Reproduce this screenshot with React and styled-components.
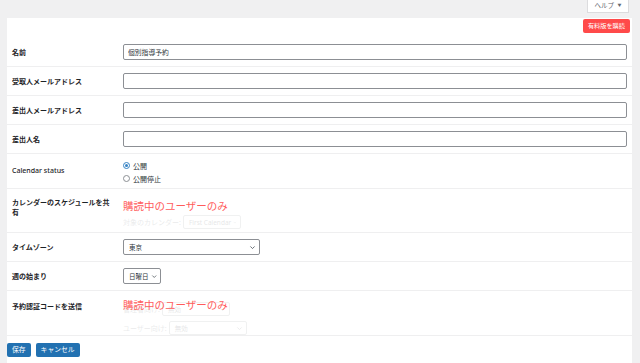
import styled, { createGlobalStyle } from "styled-components";

const GlobalStyle = createGlobalStyle`
  html, body {
    margin: 0;
    padding: 0;
    background: #f0f0f1;
  }
  body {
    font-family: "Noto Sans", "Noto Sans CJK JP", sans-serif;
    color: #1d2327;
  }
`;

const Chevron = ({ size = 7 }) => (
  <svg width={size} height={size} viewBox="0 0 10 10" fill="none">
    <path d="M2 3.5 L5 6.5 L8 3.5" stroke="#50575e" strokeWidth="1.2" />
  </svg>
);

export default function App() {
  return (
    <Page>
      <GlobalStyle />
      <TopBar>
        <HelpTab>
          ヘルプ <Caret>▼</Caret>
        </HelpTab>
      </TopBar>
      <Panel>
        <PanelHead>
          <PaidButton>有料版を購読</PaidButton>
        </PanelHead>

        <Row>
          <Label>名前</Label>
          <Field>
            <TextInput defaultValue="個別指導予約" />
          </Field>
        </Row>
        <Row>
          <Label>受取人メールアドレス</Label>
          <Field>
            <TextInput />
          </Field>
        </Row>
        <Row>
          <Label>差出人メールアドレス</Label>
          <Field>
            <TextInput />
          </Field>
        </Row>
        <Row>
          <Label>差出人名</Label>
          <Field>
            <TextInput />
          </Field>
        </Row>

        <Row>
          <Label $top={12} $weight={500}>
            Calendar status
          </Label>
          <Field $pad="5px 0 3px">
            <RadioLine>
              <Radio $checked />
              公開
            </RadioLine>
            <RadioLine>
              <Radio />
              公開停止
            </RadioLine>
          </Field>
        </Row>

        <Row>
          <Label $top={9}>カレンダーのスケジュールを共有</Label>
          <Field $pad="26px 0 3px">
            <Locked $top={10}>購読中のユーザーのみ</Locked>
            <Faded>
              <FadedLine>
                対象のカレンダー:
                <Select $width={58}>
                  First Calendar <Chevron />
                </Select>
              </FadedLine>
            </Faded>
          </Field>
        </Row>

        <Row>
          <Label>タイムゾーン</Label>
          <Field>
            <Select $width={137} $solid>
              東京 <Chevron />
            </Select>
          </Field>
        </Row>
        <Row>
          <Label>週の始まり</Label>
          <Field>
            <Select $width={38} $solid>
              日曜日 <Chevron />
            </Select>
          </Field>
        </Row>

        <Row>
          <Label $top={11}>予約認証コードを送信</Label>
          <Field $pad="11px 0 0">
            <Locked $top={7}>購読中のユーザーのみ</Locked>
            <Faded>
              <FadedLine>
                管理者向け:
                <Select $width={68}>
                  無効 <Chevron />
                </Select>
              </FadedLine>
              <FadedLine>
                ユーザー向け:
                <Select $width={78}>
                  無効 <Chevron />
                </Select>
              </FadedLine>
            </Faded>
          </Field>
        </Row>

        <Footer>
          <PrimaryButton>保存</PrimaryButton>
          <PrimaryButton>キャンセル</PrimaryButton>
        </Footer>
      </Panel>
    </Page>
  );
}

const Page = styled.div`
  height: 363px;
  overflow: hidden;
  padding: 0 8px 0 7px;
`;

const TopBar = styled.div`
  height: 18px;
  display: flex;
  justify-content: flex-end;
  align-items: flex-start;
`;

const HelpTab = styled.div`
  height: 13px;
  width: 42px;
  margin-right: 3px;
  box-sizing: border-box;
  background: #fff;
  border: 1px solid #dcdcde;
  border-top: none;
  font-size: 6.5px;
  line-height: 12px;
  color: #646970;
  text-align: center;
  white-space: nowrap;
`;

const Caret = styled.span`
  font-size: 4px;
  vertical-align: 1px;
  margin-left: 2px;
`;

const Panel = styled.div`
  background: #fff;
  min-height: 345px;
`;

const PanelHead = styled.div`
  height: 20px;
  display: flex;
  justify-content: flex-end;
  align-items: flex-start;
  padding-right: 2px;
`;

const PaidButton = styled.div`
  margin-top: 1px;
  height: 14px;
  padding: 0 5px;
  background: #ff4a4a;
  border-radius: 2px;
  color: #fff;
  font-size: 6.2px;
  line-height: 14px;
  white-space: nowrap;
`;

const Row = styled.div`
  display: grid;
  grid-template-columns: 111px 1fr;
  padding: 0 5px;
  border-bottom: 1px solid #efeff0;
`;

const Label = styled.div`
  padding-top: ${(p) => p.$top ?? 10}px;
  font-size: 7px;
  line-height: 10px;
  font-weight: ${(p) => p.$weight ?? 700};
  padding-right: 8px;
`;

const Field = styled.div`
  position: relative;
  padding: ${(p) => p.$pad || "6px 0"};
`;

const TextInput = styled.input`
  display: block;
  width: 100%;
  height: 16px;
  box-sizing: border-box;
  border: 1px solid #8c8f94;
  border-radius: 2px;
  padding: 0 4px;
  font-family: inherit;
  font-size: 6.8px;
  color: #2c3338;
  background: #fff;
  outline: none;
`;

const RadioLine = styled.div`
  display: flex;
  align-items: center;
  gap: 3px;
  height: 13px;
  font-size: 7px;
  color: #2c3338;
`;

const Radio = styled.span`
  width: 7px;
  height: 7px;
  box-sizing: border-box;
  border-radius: 50%;
  border: 1px solid ${(p) => (p.$checked ? "#3582c4" : "#8c8f94")};
  display: flex;
  align-items: center;
  justify-content: center;
  &::after {
    content: "";
    width: 3px;
    height: 3px;
    border-radius: 50%;
    background: ${(p) => (p.$checked ? "#3582c4" : "transparent")};
  }
`;

const Select = styled.div`
  width: ${(p) => p.$width}px;
  height: ${(p) => (p.$solid ? 16 : 14)}px;
  box-sizing: border-box;
  border: 1px solid #8c8f94;
  border-radius: 2px;
  padding: 0 3px 0 5px;
  display: flex;
  align-items: center;
  justify-content: space-between;
  gap: 2px;
  font-size: 6.5px;
  color: #2c3338;
  background: #fff;
  white-space: nowrap;
`;

const Faded = styled.div`
  opacity: 0.12;
  display: flex;
  flex-direction: column;
  gap: 5px;
`;

const FadedLine = styled.div`
  display: flex;
  align-items: center;
  gap: 2px;
  font-size: 7px;
  color: #50575e;
  white-space: nowrap;
`;

const Locked = styled.div`
  position: absolute;
  left: 0;
  top: ${(p) => p.$top}px;
  font-size: 10.5px;
  line-height: 14px;
  color: #ff5c5c;
  z-index: 1;
  white-space: nowrap;
`;

const Footer = styled.div`
  display: flex;
  gap: 5px;
  padding-top: 7px;
`;

const PrimaryButton = styled.div`
  height: 14px;
  padding: 0 5px;
  background: #2271b1;
  border-radius: 2px;
  color: #fff;
  font-size: 6.8px;
  line-height: 14px;
  white-space: nowrap;
`;
